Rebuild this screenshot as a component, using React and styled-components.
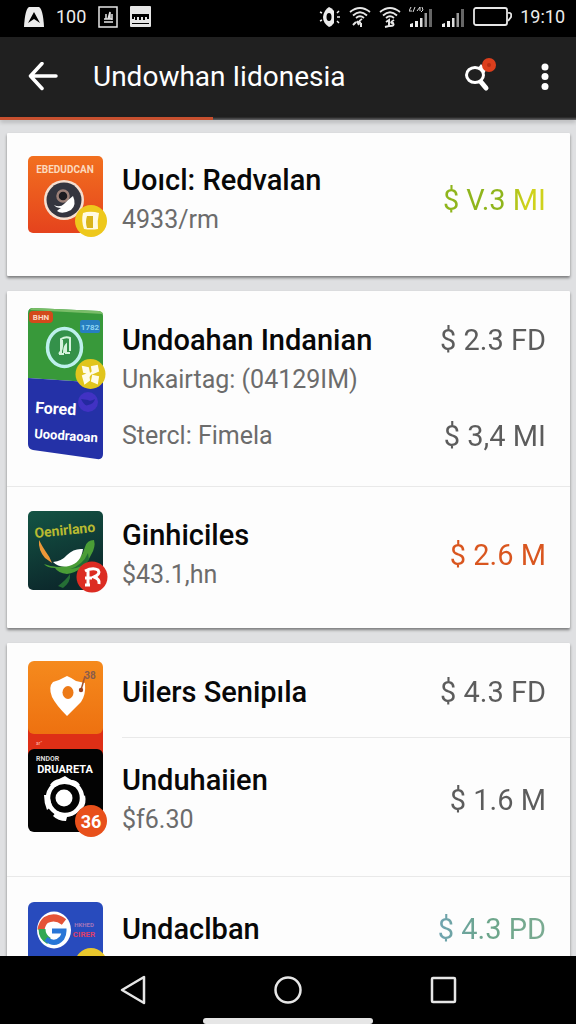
import React from "react";
import styled, { createGlobalStyle } from "styled-components";

const GlobalStyle = createGlobalStyle`
  * { box-sizing: border-box; }
  body {
    margin: 0;
    background: #dfe0e2;
    font-family: Roboto, "Liberation Sans", sans-serif;
  }
`;

const Screen = styled.div`
  display: flex;
  flex-direction: column;
  height: 100vh;
  overflow: hidden;
`;

const StatusBar = styled.div`
  display: flex;
  flex: none;
  align-items: center;
  justify-content: space-between;
  height: 37px;
  padding: 0 11px 4px 24px;
  background: #000;
  color: #ececec;
  svg { display: block; }
`;

const StatusGroup = styled.div`
  display: flex;
  align-items: center;
  gap: ${(p) => p.$gap}px;
`;

const StatusText = styled.span`
  font-size: 18px;
  line-height: 24px;
`;

const AppBar = styled.header`
  display: flex;
  flex: none;
  align-items: center;
  height: 80px;
  padding: 0 7px 0 19px;
  background: #202020;
  color: #fff;
`;

const IconButton = styled.button`
  display: grid;
  place-items: center;
  width: 48px;
  height: 48px;
  padding: 0;
  border: 0;
  background: none;
  color: inherit;
  svg { display: block; }
`;

const ScreenTitle = styled.h1`
  flex: 1;
  margin: 0;
  padding-left: 26px;
  font-size: 28px;
  font-weight: 400;
  line-height: 40px;
  white-space: nowrap;
`;

const Actions = styled.div`
  display: flex;
  gap: 19px;
`;

const Progress = styled.div`
  flex: none;
  height: 3px;
  background: linear-gradient(#202020, #68686a);
  box-shadow: 0 2px 4px rgba(0, 0, 0, 0.25);
  z-index: 1;
`;

const ProgressFill = styled.div`
  width: 37%;
  height: 100%;
  background: #c7502f;
`;

const Feed = styled.main`
  display: flex;
  flex: 1;
  flex-direction: column;
  gap: 15px;
  min-height: 0;
  padding: 13px 6px 0 7px;
  overflow: hidden;
`;

const Card = styled.section`
  flex: none;
  background: #fdfdfd;
  border-radius: 1px;
  box-shadow: 0 2px 3px rgba(0, 0, 0, 0.45);
`;

const Group = styled.article`
  display: grid;
  grid-template-columns: 80px 1fr;
  column-gap: 14px;
  padding-left: 21px;
  & + & { border-top: 1px solid #e9e9e9; }
`;

const Thumb = styled.div`
  padding-top: ${(p) => p.$top}px;
  height: 0;
  svg { display: block; }
`;

const Entry = styled.div`
  display: flex;
  align-items: center;
  justify-content: space-between;
  padding: ${(p) => p.$pad};
  border-bottom: ${(p) => (p.$divided ? "1px solid #e9e9e9" : "0")};
`;

const Name = styled.h2`
  margin: 0;
  color: #080808;
  font-size: 29px;
  font-weight: 500;
  line-height: 40px;
  white-space: nowrap;
`;

const Detail = styled.p`
  margin: 0;
  color: #6c6c6c;
  font-size: 25px;
  font-weight: 400;
  line-height: 40px;
  white-space: nowrap;
`;

const Amount = styled.span`
  color: transparent;
  background: ${(p) => p.$tone};
  background-clip: text;
  font-size: 29px;
  line-height: 40px;
  white-space: nowrap;
`;

const NavBar = styled.nav`
  position: relative;
  display: grid;
  flex: none;
  grid-template-columns: repeat(3, 1fr);
  justify-items: center;
  align-items: center;
  height: 68px;
  padding: 0 56px;
  background: #000;
  color: #e6e6e6;
`;

const HomeIndicator = styled.div`
  position: absolute;
  bottom: 0;
  left: 50%;
  width: 170px;
  height: 6px;
  margin-left: -85px;
  border-radius: 3px;
  background: #e6e6e6;
`;

const GREY = "linear-gradient(#5c5c5c, #5c5c5c)";
const LIME = "linear-gradient(90deg, #8fb51c 0 60%, #cfd21c 80%)";
const ORANGE = "linear-gradient(#d9561f, #d9561f)";
const TEAL = "linear-gradient(90deg, #6fa3b0, #6ba58a 45%, #7bab92)";

function WifiIcon({ detail }) {
  return (
    <svg width="22" height="22" viewBox="0 0 22 22" fill="none" stroke="#e6e6e6" strokeWidth="1.8">
      <path d="M1 6Q11-2 21 6M4 9.500Q11 3 18 9.500M7 12Q11 8.500 15 12" />
      <path d={detail} strokeWidth="2" />
    </svg>
  );
}

function SignalIcon({ children }) {
  return (
    <svg width="24" height="22" viewBox="0 0 24 22">
      {children}
      <path d="M1 21v-3l3-1v4zM6 21v-6h3v6z" fill="#eee" />
      <path d="M11 21v-9h2.500v9z" fill="#ddd" />
      <path d="M15.500 21v-14h2.500v14z" fill="#999" />
      <path d="M20 21v-18h3v18z" fill="#666" />
    </svg>
  );
}

function CameraThumb() {
  return (
    <svg width="80" height="82" viewBox="0 0 80 82" fontFamily="Roboto, sans-serif">
      <defs>
        <linearGradient id="cam" x1="0" y1="0" x2="0" y2="1">
          <stop offset="0" stopColor="#f2701f" />
          <stop offset="1" stopColor="#e5431d" />
        </linearGradient>
      </defs>
      <rect width="75" height="77" rx="5" fill="url(#cam)" />
      <text x="37" y="17" fontSize="10" fontWeight="700" fill="#fbd9bd" textAnchor="middle">EBEDUDCAN</text>
      <circle cx="36" cy="44" r="20" fill="#f6dfd0" />
      <circle cx="36" cy="44" r="17.500" fill="#34353f" />
      <circle cx="35" cy="40" r="5.500" fill="#1c1b20" stroke="#9c8078" strokeWidth="2.500" />
      <path d="M26 49q6 3 10-1q5-5 9-8q4 9-2 14q-9 5-14 1q2-2 4-3q-5 0-7-3z" fill="#fff" />
      <circle cx="63" cy="65" r="16" fill="#eec81c" />
      <path d="M55 57q5-2 12-1l4 1q-2 8-1 16q-7 1-14 0q-3-8-1-16z" fill="#fffbe3" />
      <path d="M59 60h6v12h-6q-2-6 0-12z" fill="#d9b41b" />
    </svg>
  );
}

function PassThumb() {
  return (
    <svg width="80" height="152" viewBox="0 0 80 152" fontFamily="Roboto, sans-serif">
      <path d="M5 0l66 3q4 1 4 5v67l-75-5V5q0-5 5-5z" fill="#38993a" />
      <path d="M5 0l66 3q4 1 4 3L2 2q1-2 3-2z" fill="#79bd68" />
      <path d="M0 70l75 5v71q0 6-6 5L5 142q-5-1-5-6z" fill="#2431a7" />
      <rect x="1" y="3" width="24" height="12" rx="4" fill="#d24a1b" />
      <text x="13" y="12" fontSize="8" fontWeight="700" fill="#fbd6c4" textAnchor="middle">BHN</text>
      <rect x="52" y="12" width="20" height="13" rx="2" fill="#277fc0" />
      <text x="62" y="22" fontSize="8" fontWeight="700" fill="#8ed5f2" textAnchor="middle">1782</text>
      <ellipse cx="36.500" cy="39.500" rx="17" ry="19" fill="#34914a" stroke="#bdf0ed" strokeWidth="3.500" />
      <path d="M31 46h5M33 45V31q5-3 9-1v13M36 45q0-6 2-8v8h4M31 46q4-4 3-14" fill="none" stroke="#d4f3dc" strokeWidth="2" />
      <circle cx="60" cy="94" r="10" fill="#4132c3" />
      <path d="M53 91q4 8 7 6q6-1 7-6q-5 3-7 1z" fill="#2429a0" />
      <circle cx="62.500" cy="66" r="15" fill="#e1c51d" />
      <path d="M55 59l5 1 1 5-5-1zM64 59l5-1 1 5-5 2zM55 68l5-2 1 6-4 3zM65 68l5 1-1 6-5-2z" fill="#fffce8" stroke="#fffce8" strokeWidth="2" />
      <path d="M58 72q4-7 10-10" fill="none" stroke="#fffce8" strokeWidth="2" />
      <text transform="rotate(3 7 105)" x="7" y="105" fontSize="16" fontWeight="700" fill="#fff">Fored</text>
      <text transform="rotate(4 7 130)" x="6" y="130" fontSize="13" fontWeight="700" fill="#fff">Uoodraoan</text>
    </svg>
  );
}

function LeafThumb() {
  return (
    <svg width="80" height="83" viewBox="0 0 80 83" fontFamily="Roboto, sans-serif">
      <defs>
        <linearGradient id="leaf" x1="0" y1="0" x2="0.300" y2="1">
          <stop offset="0" stopColor="#145444" />
          <stop offset="1" stopColor="#0c292c" />
        </linearGradient>
      </defs>
      <rect width="75" height="79" rx="5" fill="url(#leaf)" />
      <text transform="rotate(-6 8 27)" x="7" y="27" fontSize="14" fontWeight="700" fill="#b8ba31">Oenirlano</text>
      <path d="M11 29q3 6 7 12q4 5 6 11l-7-5q-7-8-6-18z" fill="#ed9838" />
      <path d="M16 53q15 6 27 0q11-5 14-17q2-7 9-7q2 7-3 15q-8 17-24 19q-9-1-12-6q-8 0-11-4z" fill="#4a9d36" />
      <path d="M25 51q9-1 14-7q7-7 16-6q-2 14-14 17q-10 2-16-4z" fill="#fff" />
      <path d="M60 42q-5 12-18 16q13-1 19-9z" fill="#216d33" />
      <path d="M30 75q8-6 12-12q1 8-7 14z" fill="#256e35" />
      <circle cx="64" cy="66" r="15.500" fill="#dc2c22" />
      <path d="M57 60q8-4 13-1q3 4-4 7q6 2 5 7M60 58v16M57 67h7M57 74h5" fill="none" stroke="#fff" strokeWidth="3" />
    </svg>
  );
}

function StackThumb() {
  return (
    <svg width="80" height="178" viewBox="0 0 80 178" fontFamily="Roboto, sans-serif">
      <defs>
        <linearGradient id="pin" x1="0" y1="0" x2="0" y2="1">
          <stop offset="0" stopColor="#f58a1d" />
          <stop offset="1" stopColor="#ee7110" />
        </linearGradient>
      </defs>
      <path d="M0 64h75v32H0z" fill="#de2f16" />
      <text x="8" y="84" fontSize="5" fill="#ffb6a5">ar"</text>
      <rect width="75" height="73" rx="6" fill="url(#pin)" />
      <path d="M39 15q5 2 9 5l9 2q1 12-4 19L39 55Q28 44 24 36q-4-10 1-15q7-2 14-6z" fill="#fff" />
      <ellipse cx="40" cy="31.500" rx="5.500" ry="6.500" fill="#ed7a17" />
      <path d="M53 29l4-14" stroke="#a6552d" strokeWidth="1.500" />
      <circle cx="53" cy="29" r="2.200" fill="#99401f" />
      <text x="62" y="18" fontSize="10" fontWeight="700" fill="#8a5d4c" textAnchor="middle">38</text>
      <rect y="88" width="75" height="83" rx="6" fill="#030303" />
      <text x="8" y="100" fontSize="7" fontWeight="700" fill="#d8d8d8">RNDOR</text>
      <text x="37" y="112" fontSize="11" fontWeight="700" fill="#fff" textAnchor="middle">DRUARETA</text>
      <circle cx="37" cy="137" r="17" fill="none" stroke="#fff" strokeWidth="4.500" />
      <path d="M31 118l6-3 6 4q6 0 9 5l-5 2q-11-6-20 0l-5-2q3-5 9-6zM16 134h5l3 11-5 4q-3-7-3-15zM25 155l4-5q6 3 11 2l-2 8q-8 0-13-5zM53 139l4-5q2 9-3 14h-5z" fill="#fff" />
      <circle cx="36" cy="137" r="8.500" fill="#fff" />
      <circle cx="63" cy="160" r="16" fill="#e8501b" />
      <text x="63" y="167" fontSize="18" fontWeight="700" fill="#fff" textAnchor="middle">36</text>
    </svg>
  );
}

function GoogleThumb() {
  return (
    <svg width="80" height="80" viewBox="0 0 80 80" fontFamily="Roboto, sans-serif">
      <rect width="75" height="78" rx="6" fill="#284bbd" />
      <ellipse cx="26" cy="28" rx="17" ry="18.500" fill="#fff" />
      <path d="M36 20Q27 13 18 18Q14 21 13 28" fill="none" stroke="#e55337" strokeWidth="7" />
      <path d="M14 27q0 8 7 12" fill="none" stroke="#31a853" strokeWidth="7" />
      <path d="M18 37q9 7 16-1q2-3 2-7H24" fill="none" stroke="#2876d7" strokeWidth="5" />
      <text x="56" y="25" fontSize="6" fontWeight="700" fill="#a375b9" textAnchor="middle">HKHED</text>
      <text x="56" y="35" fontSize="8" fontWeight="700" fill="#dc3f6a" textAnchor="middle">CIRER</text>
      <circle cx="63" cy="62" r="16" fill="#e9c72c" />
    </svg>
  );
}

export default function App() {
  return (
    <Screen>
      <GlobalStyle />
      <StatusBar>
        <StatusGroup $gap={12}>
          <svg width="20" height="22" viewBox="0 0 20 22">
            <path d="M5 1h10q4 2 5 20H0Q1 3 5 1z" fill="#ececec" />
            <path d="M10 6l6 11-6-4-6 4z" fill="#000" />
          </svg>
          <StatusText>100</StatusText>
          <svg width="20" height="22" viewBox="0 0 20 22" fill="none" stroke="#e6e6e6">
            <rect x="1" y="1" width="18" height="20" strokeWidth="1.500" />
            <path d="M6 16h9M8 13v-5M10 13l2-7v7M14 8v6M6 13h8" strokeWidth="1.500" />
          </svg>
          <svg width="21" height="22" viewBox="0 0 21 22">
            <rect width="21" height="21" rx="1" fill="#e6e6e6" />
            <path d="M2 8h17v5h-2v-2h-2v3h-2v-3h-2v3H9v-3H7v3H5v-3H4v2H2zM2 17h17v1H2z" fill="#000" />
          </svg>
        </StatusGroup>
        <StatusGroup $gap={8}>
          <svg width="22" height="22" viewBox="0 0 22 22">
            <path d="M10 1q3 1 5 4v12q-2 3-5 4-6-4-6-10 1-7 6-10z" fill="#ececec" />
            <ellipse cx="10" cy="11" rx="2.500" ry="4" fill="#000" />
            <path d="M18 7l2-2M18 11h3M18 15l2 2M3 7L1 6M3 14l-2 1" stroke="#ececec" strokeWidth="1.500" />
          </svg>
          <WifiIcon detail="M7 16l-3 3M13 13q-5 3-1 4M12 17v4M8 15l2 4" />
          <WifiIcon detail="M7 16l3-2v6l-4 1M15 14q-5 3-1 3q2 3-3 3" />
          <SignalIcon>
            <path d="M2 1L0 5h3M6 1L4 6M8 5l3-4v4M13 1l1 3-2 2" fill="none" stroke="#ddd" />
          </SignalIcon>
          <SignalIcon />
          <svg width="39" height="20" viewBox="0 0 39 20" fill="none" stroke="#e6e6e6" strokeWidth="1.800">
            <rect x="1" y="1" width="33" height="17" rx="2" />
            <path d="M35 6q4-1 3 4l-3 4" />
          </svg>
          <StatusText>19:10</StatusText>
        </StatusGroup>
      </StatusBar>

      <AppBar>
        <IconButton aria-label="Back">
          <svg width="30" height="30" viewBox="0 0 30 30" fill="none" stroke="#fff" strokeWidth="3.500" strokeLinecap="round" strokeLinejoin="round">
            <path d="M28 14H3M14 1.500L2.500 14 14 26.500" />
          </svg>
        </IconButton>
        <ScreenTitle>Undowhan Iidonesia</ScreenTitle>
        <Actions>
          <IconButton aria-label="Search">
            <svg width="38" height="42" viewBox="0 0 38 42">
              <ellipse cx="16" cy="19" rx="8.500" ry="7.500" fill="none" stroke="#fff" strokeWidth="3" />
              <path d="M19 12l3-4 5 6-2 4z" fill="#fff" />
              <path d="M22 26l5 6" stroke="#fff" strokeWidth="5" strokeLinecap="round" />
              <circle cx="30" cy="9" r="7" fill="#dc3f1d" />
              <circle cx="30" cy="9" r="2" fill="#b82e14" />
            </svg>
          </IconButton>
          <IconButton aria-label="More options">
            <svg width="8" height="28" viewBox="0 0 8 28" fill="#fff">
              <circle cx="4" cy="4" r="3.500" />
              <circle cx="4" cy="13.500" r="3.500" />
              <circle cx="4" cy="23.500" r="3.500" />
            </svg>
          </IconButton>
        </Actions>
      </AppBar>
      <Progress role="progressbar" aria-label="Loading" aria-valuenow={37}>
        <ProgressFill />
      </Progress>

      <Feed>
        <Card>
          <Group>
            <Thumb $top={23}><CameraThumb /></Thumb>
            <Entry $pad="27px 24px 36px 0">
              <div>
                <Name>Uoıcl: Redvalan</Name>
                <Detail>4933/rm</Detail>
              </div>
              <Amount $tone={LIME}>$ V.3 MI</Amount>
            </Entry>
          </Group>
        </Card>

        <Card>
          <Group>
            <Thumb $top={17}><PassThumb /></Thumb>
            <div>
              <Entry $pad="29px 24px 0 0">
                <Name>Undoahan Indanian</Name>
                <Amount $tone={GREY}>$ 2.3 FD</Amount>
              </Entry>
              <Entry $pad="0 24px 16px 0">
                <Detail>Unkairtag: (04129IM)</Detail>
              </Entry>
              <Entry $pad="0 24px 30px 0">
                <Detail>Stercl: Fimela</Detail>
                <Amount $tone={GREY}>$ 3,4 MI</Amount>
              </Entry>
            </div>
          </Group>
          <Group>
            <Thumb $top={24}><LeafThumb /></Thumb>
            <Entry $pad="28px 24px 33px 0">
              <div>
                <Name>Ginhiciles</Name>
                <Detail>$43.1,hn</Detail>
              </div>
              <Amount $tone={ORANGE}>$ 2.6 M</Amount>
            </Entry>
          </Group>
        </Card>

        <Card>
          <Group>
            <Thumb $top={18}><StackThumb /></Thumb>
            <div>
              <Entry $pad="29px 24px 25px 0" $divided>
                <Name>Uilers Senipıla</Name>
                <Amount $tone={GREY}>$ 4.3 FD</Amount>
              </Entry>
              <Entry $pad="22px 24px 36px 0">
                <div>
                  <Name>Unduhaiien</Name>
                  <Detail>$f6.30</Detail>
                </div>
                <Amount $tone={GREY}>$ 1.6 M</Amount>
              </Entry>
            </div>
          </Group>
          <Group>
            <Thumb $top={25}><GoogleThumb /></Thumb>
            <Entry $pad="32px 24px 36px 0">
              <Name>Undaclban</Name>
              <Amount $tone={TEAL}>$ 4.3 PD</Amount>
            </Entry>
          </Group>
        </Card>
      </Feed>

      <NavBar aria-label="System">
        <IconButton aria-label="Back">
          <svg width="28" height="32" viewBox="0 0 28 32" fill="none" stroke="currentColor" strokeWidth="2.500" strokeLinejoin="round">
            <path d="M25 3v26L3 16z" />
          </svg>
        </IconButton>
        <IconButton aria-label="Home">
          <svg width="30" height="30" viewBox="0 0 30 30" fill="none" stroke="currentColor" strokeWidth="2.500">
            <circle cx="15" cy="15" r="12.500" />
          </svg>
        </IconButton>
        <IconButton aria-label="Recent apps">
          <svg width="28" height="28" viewBox="0 0 28 28" fill="none" stroke="currentColor" strokeWidth="2.500">
            <rect x="3" y="2" width="23" height="24" rx="1" />
          </svg>
        </IconButton>
        <HomeIndicator />
      </NavBar>
    </Screen>
  );
}
